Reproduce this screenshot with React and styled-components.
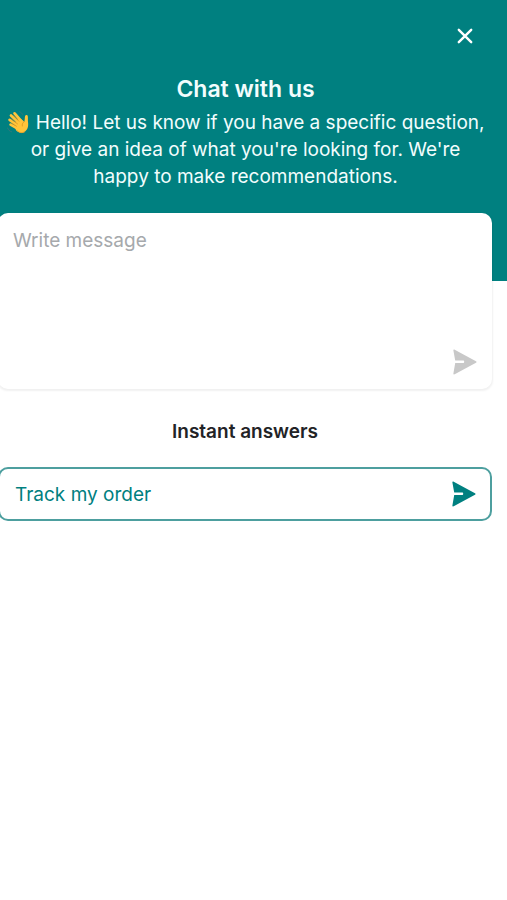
import React, { useState } from 'react';
import styled, { createGlobalStyle } from 'styled-components';

const GlobalStyle = createGlobalStyle`
  * {
    box-sizing: border-box;
  }
  body {
    margin: 0;
    background: #fff;
    font-family: Inter, 'Noto Sans', sans-serif;
    overflow-x: hidden;
  }
  button, textarea {
    font-family: inherit;
  }
`;

const Header = styled.header`
  background: #008080;
  padding: 20px 16px 91px 0;
  color: #f2fdfd;
  text-align: center;
`;

const TopBar = styled.div`
  display: flex;
  justify-content: flex-end;
  padding-right: 10px;
`;

const CloseButton = styled.button`
  display: flex;
  align-items: center;
  justify-content: center;
  width: 32px;
  height: 32px;
  padding: 0;
  border: 0;
  background: none;
  color: #fff;
  cursor: pointer;
`;

const Title = styled.h1`
  margin: 21px 0 0;
  font-size: 23px;
  line-height: 32px;
  font-weight: 600;
`;

const Intro = styled.p`
  margin: 4px 0 0;
  padding: 0 4px;
  font-size: 19px;
  line-height: 27px;
`;

const Wave = styled.svg`
  width: 24px;
  height: 24px;
  vertical-align: -5px;
`;

const Content = styled.main`
  margin: -68px 15px 0 -2px;
`;

const Composer = styled.form`
  display: flex;
  height: 176px;
  padding: 14px 15px;
  border-radius: 10px;
  background: #fff;
  box-shadow: 0 1px 2px 1px rgba(0, 0, 0, 0.06);
`;

const MessageInput = styled.textarea`
  flex: 1;
  min-width: 0;
  padding: 0;
  border: 0;
  outline: 0;
  resize: none;
  background: none;
  color: #222;
  font-size: 19px;
  line-height: 27px;

  &::placeholder {
    color: #a6a9ac;
    opacity: 1;
  }
`;

const SendButton = styled.button`
  display: flex;
  align-self: flex-end;
  padding: 0;
  border: 0;
  background: none;
  color: #c8c8c8;
  cursor: pointer;
`;

const SectionTitle = styled.h2`
  margin: 29px 0 21px;
  color: #222326;
  font-size: 19px;
  line-height: 28px;
  font-weight: 600;
  text-align: center;
`;

const Answer = styled.button`
  display: flex;
  align-items: center;
  justify-content: space-between;
  width: 100%;
  height: 54px;
  padding: 0 14px 0 15px;
  border: 2px solid #4d9f9f;
  border-radius: 10px;
  background: #fff;
  color: #008080;
  font-size: 19px;
  line-height: 27px;
  cursor: pointer;
`;

const SendIcon = () => (
  <svg width="24" height="26" viewBox="0 0 24 26" fill="currentColor" aria-hidden="true">
    <path d="M1.7.7 23 12.2a.9.9 0 0 1 0 1.6L1.7 25.3C1 25.7.3 25.3.4 24.5L2.2 14H10.4Q11.2 14 11.2 12.7T10.4 11.4H2.2L.4 1.5C.3.7 1 .3 1.7.7Z" />
  </svg>
);

const CloseIcon = () => (
  <svg width="16" height="16" viewBox="0 0 16 16" fill="none" stroke="currentColor" strokeWidth="2.4" strokeLinecap="round" aria-hidden="true">
    <path d="M1.8 1.8 14.2 14.2M14.2 1.8 1.8 14.2" />
  </svg>
);

const WavingHand = () => (
  <Wave viewBox="0 0 24 24" fill="none" strokeLinecap="round" strokeLinejoin="round" role="img" aria-label="Waving hand">
    <path d="M12.5 19 4.6 14.6M12 16 3.6 9.9M13 13 5 5.5M15.5 11.5 8.6 3.4" stroke="#ffc43a" strokeWidth="2.7" />
    <path d="m8.5 14.8 1.7-4.5 4.2-1.9 3.9 3.3c.7-1.8.3-3.8.8-5.7.4-1.5 2.5-1.3 2.7.2.3 2-.1 3.7.2 5.7.6 4.4-.2 7.8-3.5 9.8-3.1 1.9-6.5.9-8.6-1.8Z" fill="#ffc43a" />
    <path d="m5.9 13.3 4.5 2.9M5.5 9.1l6 4.8M7.5 5.7l5.4 5.5M18.2 11.7c-1.6 1-2.3 2.5-1.9 4.3" stroke="#d98c1b" strokeWidth=".7" />
    <path d="M11 20.3c2.3 2.6 5.2 3 7.8 1.4" stroke="#eda52b" strokeWidth="1" />
    <path d="M1.6 18c.7 2 2 3.2 4 3.8M13.6 1.8c1.4.4 2.3 1.2 2.8 2.5" stroke="#38767c" strokeWidth=".9" />
  </Wave>
);

const App = () => {
  const [message, setMessage] = useState('');

  return (
    <>
      <GlobalStyle />
      <Header>
        <TopBar>
          <CloseButton type="button" aria-label="Close chat">
            <CloseIcon />
          </CloseButton>
        </TopBar>
        <Title>Chat with us</Title>
        <Intro>
          <WavingHand /> Hello! Let us know if you have a specific question, or give an idea of
          what you're looking for. We're happy to make recommendations.
        </Intro>
      </Header>
      <Content>
        <Composer onSubmit={e => e.preventDefault()}>
          <MessageInput
            aria-label="Write message"
            placeholder="Write message"
            value={message}
            onChange={e => setMessage(e.target.value)}
          />
          <SendButton type="submit" aria-label="Send message">
            <SendIcon />
          </SendButton>
        </Composer>
        <SectionTitle>Instant answers</SectionTitle>
        <Answer type="button">
          Track my order
          <SendIcon />
        </Answer>
      </Content>
    </>
  );
};

export default App;
